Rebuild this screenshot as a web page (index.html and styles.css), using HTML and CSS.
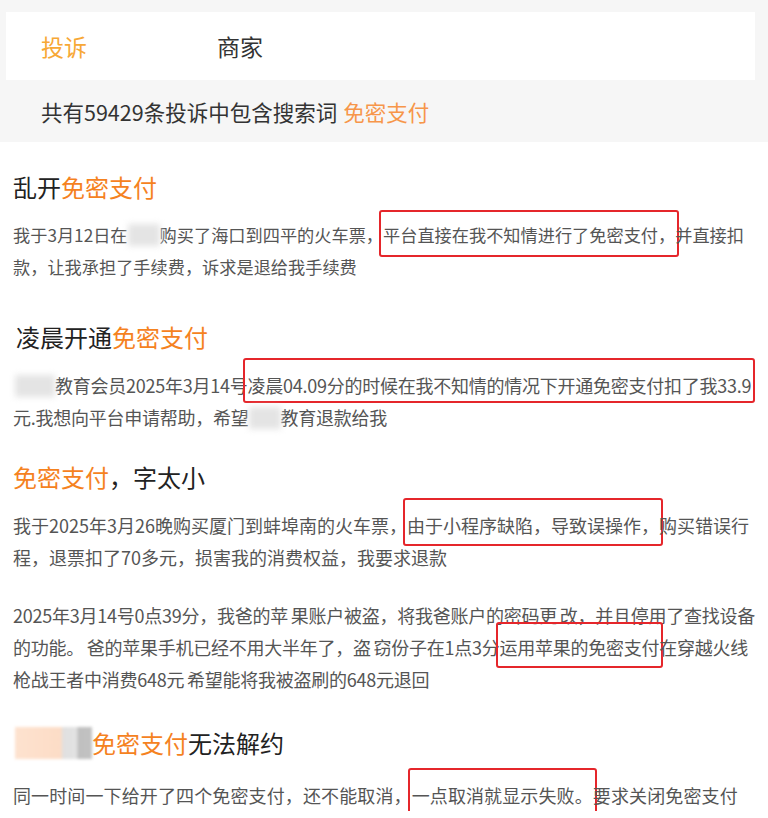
FILE: index.html
```html
<!DOCTYPE html>
<html lang="zh-CN">
<head>
<meta charset="utf-8">
<title>投诉搜索</title>
<link rel="stylesheet" href="styles.css">
</head>
<body>
<div class="top">
  <div class="tabs">
    <span class="tab tab-active">投诉</span>
    <span class="tab">商家</span>
  </div>
  <div class="count">共有59429条投诉中包含搜索词<span class="count-key">免密支付</span></div>
</div>
<div class="list">
  <div class="item">
    <h2 class="title">乱开<span class="hl">免密支付</span></h2>
    <p class="body body-sm">我于3月12日在<span class="blur"></span>购买了海口到四平的火车票，<span class="mark mark-a">平台直接在我不知情进行了免密支付，</span>并直接扣<br>款，让我承担了手续费，诉求是退给我手续费</p>
  </div>
  <div class="item item-lg">
    <h2 class="title title-in">凌晨开通<span class="hl">免密支付</span></h2>
    <p class="body body-tight"><span class="blur blur-lead"></span>教育会员2025年3月14号<span class="mark mark-b">凌晨04.09分的时候在我不知情的情况下开通免密支付扣了我33.9</span><br>元.我想向平台申请帮助，希望<span class="blur"></span>教育退款给我</p>
  </div>
  <div class="item">
    <h2 class="title">
      <span class="hl">免密支付</span>，字太小</h2>
    <p class="body">我于2025年3月26晚购买厦门到蚌埠南的火车票，<span class="mark">由于小程序缺陷，导致误操作，</span>购买错误行<br>程，退票扣了70多元，损害我的消费权益，我要求退款</p>
  </div>
  <div class="item">
    <p class="body body-tight body-spaces">2025年3月14号0点39分，我爸的苹 果账户被盗，将我爸账户的密码更 改，并且停用了查找设备<br>的功能。 爸的苹果手机已经不用大半年了，盗 窃份子在1点3分<span class="mark mark-c">运用苹果的免密支付</span>在穿越火线<br>枪战王者中消费648元 希望能将我被盗刷的648元退回</p>
  </div>
  <div class="item item-last">
    <h2 class="title title-loose"><span class="blur-logo"></span><span class="hl">免密支付</span>无法解约</h2>
    <p class="body body-wide">同一时间一下给开了四个免密支付，还不能取消，<span class="mark">一点取消就显示失败。</span>要求关闭免密支付</p>
  </div>
</div>
</body>
</html>
```

FILE: styles.css
```css
html, body {
  margin: 0;
  padding: 0;
  background: #ffffff;
}
body {
  font-family: "Noto Sans CJK SC", "Noto Sans", sans-serif;
  color: #333;
  width: 768px;
  overflow: hidden;
}
.top {
  background: #f6f6f6;
  padding: 12px 13px 0 6px;
  height: 130px;
}
.tabs {
  background: #ffffff;
  height: 68px;
  display: flex;
  align-items: center;
  padding-left: 35px;
}
.tab {
  font-size: 23px;
  color: #333;
  width: 176px;
}
.tab-active {
  color: #f7a836;
}
.count {
  height: 62px;
  display: flex;
  align-items: center;
  padding-left: 35px;
  font-size: 21.5px;
  color: #333;
}
.count-key {
  color: #f7964a;
  margin-left: 6px;
}
.list {
  padding: 0 0 0 13px;
}
.item {
  margin-top: 26px;
}
.item:first-child {
  margin-top: 27px;
}
.item-lg {
  margin-top: 36px;
}
.item-last {
  margin-top: 30px;
}
.title {
  margin: 0 0 14px 0;
  font-size: 24px;
  line-height: 36px;
  font-weight: normal;
  color: #222;
  display: flex;
  align-items: center;
}
.title-in {
  padding-left: 3px;
}
.title-loose {
  margin-bottom: 18px;
}
.hl {
  color: #f5821f;
}
.body {
  margin: 0;
  font-size: 18px;
  line-height: 32px;
  color: #555;
  white-space: nowrap;
}
.body-sm {
  font-size: 17.2px;
}
.body-tight {
  letter-spacing: -0.25px;
}
.body-spaces {
  word-spacing: -1px;
}
.body-wide {
  letter-spacing: 0.12px;
}
.mark {
  border: 2px solid #e5262b;
  border-radius: 3px;
  padding: 12px 2px 6px 2px;
  margin: 0 -4px;
}
.mark-a {
  padding-top: 10px;
  padding-bottom: 8px;
}
.mark-b {
  padding-top: 12px;
  padding-bottom: 3px;
}
.mark-c {
  padding-top: 10px;
  padding-bottom: 6px;
}
.blur {
  display: inline-block;
  width: 32px;
  height: 22px;
  vertical-align: -4px;
  background: #e4e4e4;
  filter: blur(3px);
}
.blur-lead {
  width: 40px;
  margin-left: 2px;
}
.blur-logo {
  display: inline-block;
  width: 77px;
  height: 32px;
  margin-left: 2px;
  background: linear-gradient(90deg, #fde2cf 0, #fcdcc6 60%, #e0e0e0 62%, #e2e2e2 80%, #bfbfbf 82%, #c2c2c2 100%);
  filter: blur(1.5px);
}
```
